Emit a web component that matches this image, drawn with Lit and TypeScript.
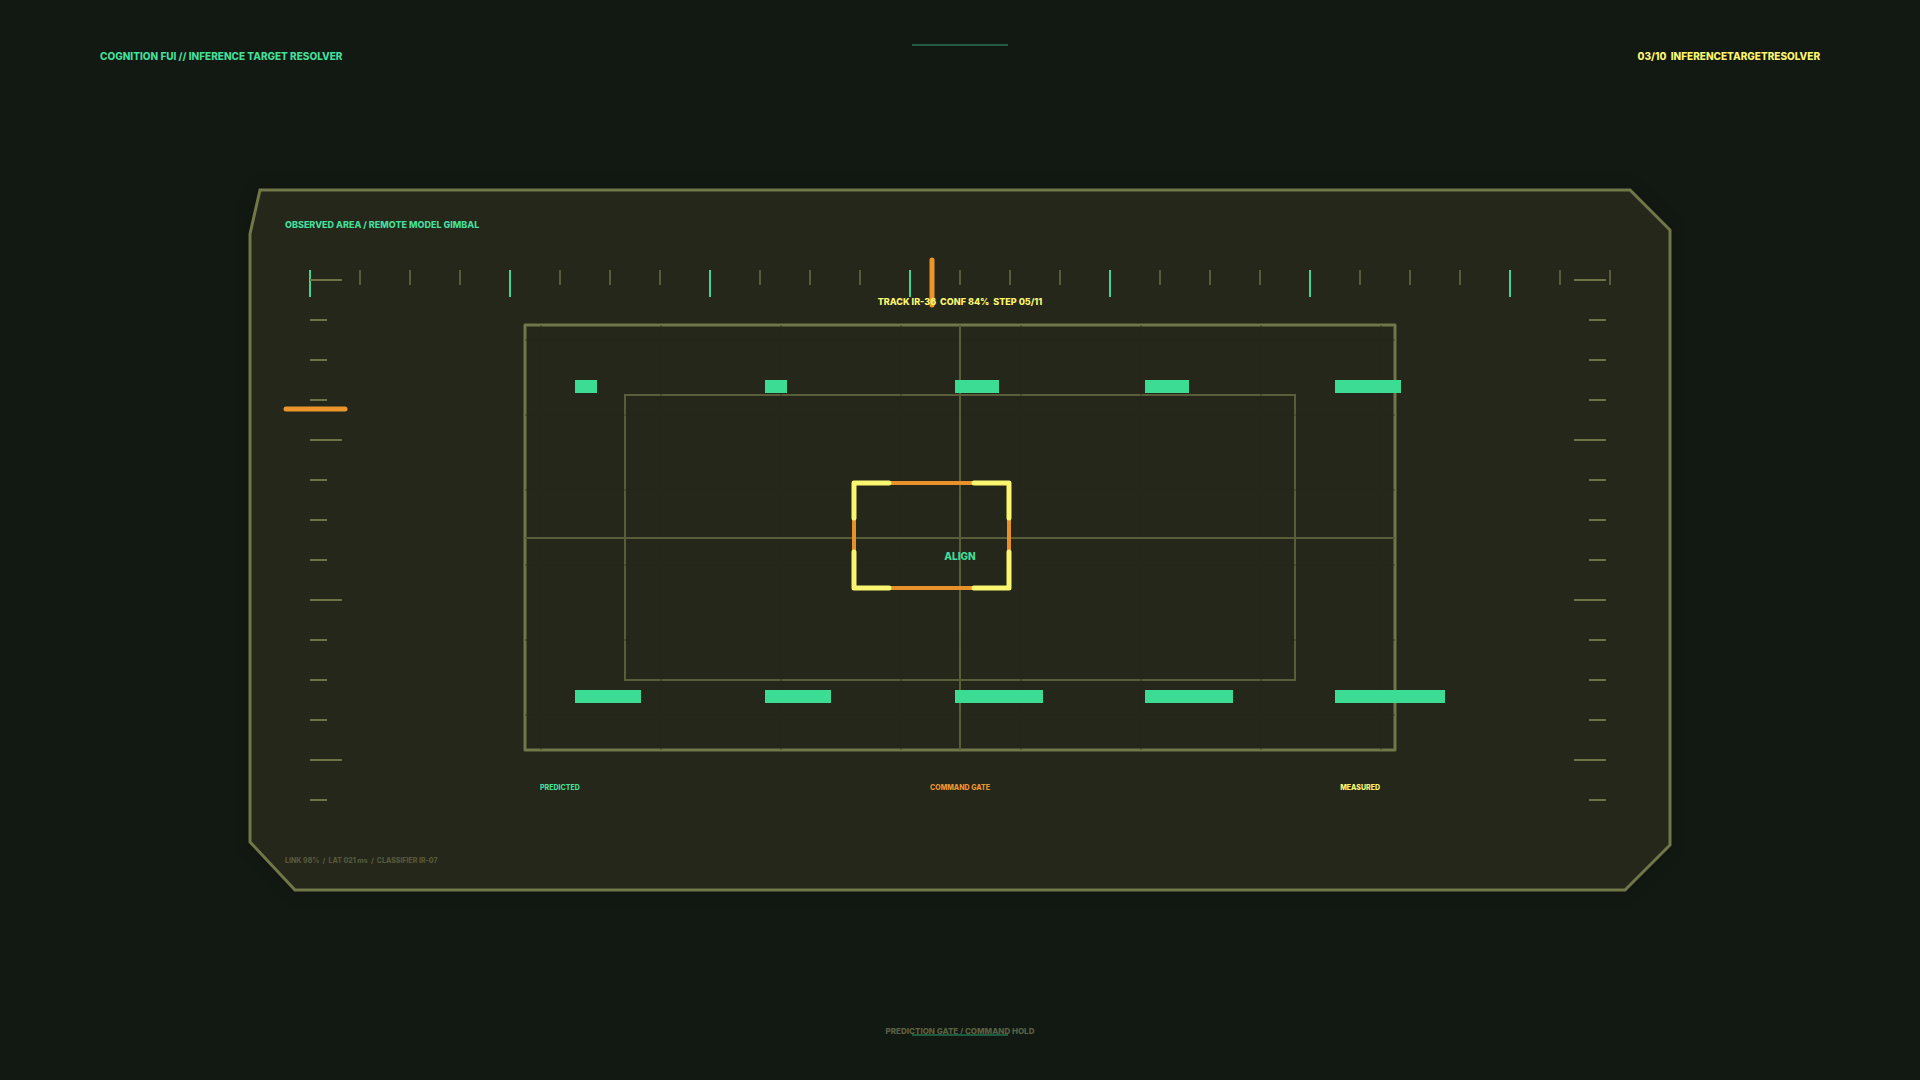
import { LitElement, html, svg, css } from "lit";
import { customElement, property } from "lit/decorators.js";

const range = (count: number) => Array.from({ length: count }, (_, i) => i);

/** Confidence blocks: left edge of each column and the units above and below. */
const COLUMNS = [
  { x: 575, top: 1, bottom: 3 },
  { x: 765, top: 1, bottom: 3 },
  { x: 955, top: 2, bottom: 4 },
  { x: 1145, top: 2, bottom: 4 },
  { x: 1335, top: 3, bottom: 5 },
];
const UNIT = 22;

@customElement("target-scope")
class TargetScope extends LitElement {
  @property({ type: Number }) heading = 932;
  @property({ type: Number }) elevation = 409;

  static styles = css`
    :host {
      display: flex;
      min-height: 0;
    }
    .scope {
      width: 100%;
      height: 100%;
      font-family: Inter, "Noto Sans", sans-serif;
      font-weight: 800;
    }
    text {
      white-space: pre;
    }
    .panel {
      fill: #25271b;
      stroke: #717748;
      stroke-width: 3;
      filter: drop-shadow(0 0 8px rgb(0 0 0 / 0.15));
    }
    .frame {
      fill: none;
      stroke: #717748;
      stroke-width: 3;
      stroke-linejoin: round;
    }
    .inner,
    .cross {
      fill: none;
      stroke: #595d39;
      stroke-width: 2;
    }
    .notch {
      stroke: #25271b;
      stroke-width: 1;
      opacity: 0.6;
    }
    .minor {
      stroke: #595b3c;
      stroke-width: 2;
    }
    .major {
      stroke: #42d292;
      stroke-width: 2;
    }
    .rung {
      stroke: #6f7246;
      stroke-width: 2;
    }
    .needle {
      stroke: #eb962d;
      stroke-width: 5;
      stroke-linecap: round;
    }
    .gate {
      fill: none;
      stroke: #e8912b;
      stroke-width: 4;
    }
    .bracket {
      fill: none;
      stroke: #fbf66f;
      stroke-width: 5;
      stroke-linecap: round;
      stroke-linejoin: round;
    }
    .block {
      fill: #3ddc95;
    }
    .green {
      fill: #42de9a;
    }
    .yellow {
      fill: #fbf66f;
    }
    .orange {
      fill: #eb962d;
    }
    .dim {
      fill: #54583a;
    }
    .label {
      font-size: 9px;
    }
    .status {
      font-size: 10px;
    }
    .small {
      font-size: 7px;
    }
    .middle {
      text-anchor: middle;
    }
    .end {
      text-anchor: end;
    }
  `;

  private horizontalScale() {
    return range(27).map((i) => {
      const x = 310 + i * 50;
      const major = i % 4 === 0;
      return svg`<line class=${major ? "major" : "minor"} x1=${x} y1="270" x2=${x} y2=${major ? 297 : 285} />`;
    });
  }

  private verticalScale() {
    return range(14).map((i) => {
      const y = 280 + i * 40;
      const length = i % 4 === 0 ? 32 : 17;
      return svg`
        <line class="rung" x1="310" y1=${y} x2=${310 + length} y2=${y} />
        <line class="rung" x1=${1606 - length} y1=${y} x2="1606" y2=${y} />`;
    });
  }

  private notches() {
    return [
      ...range(8).map((i) => svg`<path class="notch" d="M${541 + i * 120} 325V750" />`),
      ...range(6).map((i) => svg`<path class="notch" d="M525 ${340 + i * 75}H1395" />`),
    ];
  }

  render() {
    return html`
      <svg class="scope" viewBox="0 110 1920 860" role="img" aria-label="Remote model gimbal">
        <path class="panel" d="M260 190H1630L1670 230V845L1625 890H295L250 842V234Z" />

        ${this.horizontalScale()} ${this.verticalScale()}

        <rect class="frame" x="525" y="325" width="870" height="425" />
        <rect class="inner" x="625" y="395" width="670" height="285" />
        ${this.notches()}
        <path class="cross" d="M960 325V750M525 538H1395" />

        ${COLUMNS.map(
          (c) => svg`
            <rect class="block" x=${c.x} y="380" width=${c.top * UNIT} height="13" />
            <rect class="block" x=${c.x} y="690" width=${c.bottom * UNIT} height="13" />`
        )}

        <line class="needle" x1=${this.heading} y1="260" x2=${this.heading} y2="305" />
        <line class="needle" x1="286" y1=${this.elevation} x2="345" y2=${this.elevation} />

        <rect class="gate" x="854" y="483" width="155" height="105" />
        <path
          class="bracket"
          d="M889 483H854V518M974 483H1009V518M889 588H854V552M974 588H1009V552"
        />

        <text class="label green" x="285" y="228">OBSERVED AREA / REMOTE MODEL GIMBAL</text>
        <text class="label yellow middle" x="960" y="305">TRACK IR-36  CONF 84%  STEP 05/11</text>
        <text class="status green middle" x="960" y="560">ALIGN</text>
        <text class="small green" x="540" y="790">PREDICTED</text>
        <text class="small orange middle" x="960" y="790">COMMAND GATE</text>
        <text class="small yellow end" x="1380" y="790">MEASURED</text>
        <text class="small dim" x="285" y="863">LINK 98%  /  LAT 021 ms  /  CLASSIFIER IR-07</text>
      </svg>
    `;
  }
}

@customElement("app-root")
class AppRoot extends LitElement {
  static styles = css`
    :host {
      display: grid;
      grid-template-rows: 110px minmax(0, 1fr) 110px;
      height: 100vh;
      background: #121812;
      font-family: Inter, "Noto Sans", sans-serif;
      font-weight: 800;
      font-size: 10px;
      line-height: 16px;
    }
    .bar {
      position: relative;
      box-sizing: border-box;
      display: flex;
      justify-content: space-between;
      align-items: flex-start;
      padding: 48px 100px 0;
    }
    .foot {
      justify-content: center;
      align-items: flex-end;
      padding: 0 100px 41px;
      color: #596140;
      font-size: 8px;
    }
    .title,
    .index {
      white-space: pre;
    }
    .title {
      margin: 0;
      font-size: 10px;
      font-weight: 800;
      color: #42de9a;
    }
    .index {
      color: #fbf66f;
    }
    .bar::after {
      content: "";
      position: absolute;
      left: 50%;
      top: 44px;
      width: 96px;
      height: 2px;
      transform: translateX(-50%);
      background: #235a41;
    }
    .foot::after {
      top: auto;
      bottom: 44px;
      background: #1d5b41;
    }
  `;

  render() {
    return html`
      <header class="bar">
        <h1 class="title">COGNITION FUI // INFERENCE TARGET RESOLVER</h1>
        <span class="index">03/10  INFERENCETARGETRESOLVER</span>
      </header>
      <target-scope></target-scope>
      <footer class="bar foot">
        <span>PREDICTION GATE / COMMAND HOLD</span>
      </footer>
    `;
  }
}
